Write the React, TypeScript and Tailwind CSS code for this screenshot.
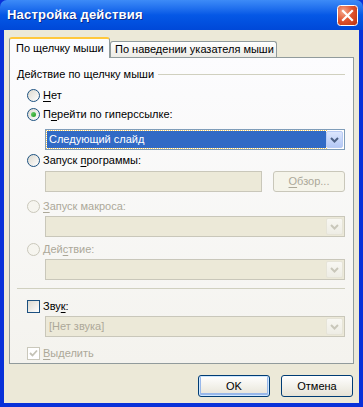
import React from 'react'

const font = { fontFamily: '"Liberation Sans", Arial, sans-serif' }

function Radio({ checked, disabled }: { checked?: boolean; disabled?: boolean }) {
  return (
    <span
      className={`relative flex h-[13px] w-[13px] shrink-0 items-center justify-center rounded-full border ${
        disabled
          ? 'border-[#CAC8BB] bg-[#F6F5EF]'
          : 'border-[#1C5180] bg-gradient-to-br from-[#DCD9CF] to-white'
      }`}
    >
      {checked && <span className="h-[5px] w-[5px] rounded-full bg-gradient-to-br from-[#6BD26B] to-[#1C9A1C]" />}
    </span>
  )
}

function Check({ checked, disabled }: { checked?: boolean; disabled?: boolean }) {
  return (
    <span
      className={`flex h-[13px] w-[13px] shrink-0 items-center justify-center border ${
        disabled ? 'border-[#CAC8BB] bg-white' : 'border-[#1C5180] bg-gradient-to-br from-[#DCD9CF] to-white'
      }`}
    >
      {checked && (
        <svg width="9" height="9" viewBox="0 0 9 9">
          <path d="M1 4 L3.5 6.5 L8 1.5" fill="none" stroke={disabled ? '#C4C2B6' : '#21A121'} strokeWidth="1.8" />
        </svg>
      )}
    </span>
  )
}

function Arrow({ disabled }: { disabled?: boolean }) {
  return (
    <span
      className={`flex h-full w-[17px] items-center justify-center rounded-[2px] border ${
        disabled
          ? 'border-[#E6E4D8] bg-gradient-to-b from-[#F8F7F2] to-[#EEEDE5]'
          : 'border-[#B9CBF3] bg-gradient-to-b from-[#DCE6FD] to-[#B4C8F5]'
      }`}
    >
      <svg width="9" height="6" viewBox="0 0 9 6">
        <path d="M1 1 L4.5 4.5 L8 1" fill="none" stroke={disabled ? '#C9C7BA' : '#4D6185'} strokeWidth="2" />
      </svg>
    </span>
  )
}

function Select({ value, selected, disabled }: { value?: string; selected?: boolean; disabled?: boolean }) {
  return (
    <div
      className={`flex h-[21px] items-stretch border p-[1px] ${
        disabled ? 'border-[#C9C7BA] bg-[#ECE9D8]' : 'border-[#7F9DB9] bg-white'
      }`}
    >
      <div
        className={`flex flex-1 items-center px-[2px] ${
          selected ? 'bg-[#316AC5] text-white outline-1 outline-dotted outline-[#F2C85B]' : ''
        } ${disabled ? 'text-[#ACA899]' : ''}`}
      >
        {value}
      </div>
      <Arrow disabled={disabled} />
    </div>
  )
}

function Option({
  label,
  ul,
  checked,
  disabled,
  box,
}: {
  label: string
  ul: number
  checked?: boolean
  disabled?: boolean
  box?: boolean
}) {
  return (
    <div className={`flex h-[13px] items-center gap-[3px] ${disabled ? 'text-[#ACA899]' : 'text-black'}`}>
      {box ? <Check checked={checked} disabled={disabled} /> : <Radio checked={checked} disabled={disabled} />}
      <span className="leading-[13px]">
        {label.slice(0, ul)}
        <span className="underline underline-offset-[2px]">{label[ul]}</span>
        {label.slice(ul + 1)}
      </span>
    </div>
  )
}

function CloseIcon() {
  return (
    <svg width="21" height="21" viewBox="0 0 21 21">
      <defs>
        <radialGradient id="cls" cx="0.3" cy="0.3" r="0.9">
          <stop offset="0" stopColor="#F6A88C" />
          <stop offset="0.5" stopColor="#E0542F" />
          <stop offset="1" stopColor="#C1360F" />
        </radialGradient>
      </defs>
      <rect x="0.5" y="0.5" width="20" height="20" rx="3" fill="url(#cls)" stroke="#FFFFFF" />
      <path d="M6 6 L15 15 M15 6 L6 15" stroke="#FFFFFF" strokeWidth="2.2" strokeLinecap="square" />
    </svg>
  )
}

export default function App() {
  return (
    <div className="flex h-[407px] w-[363px] flex-col overflow-hidden bg-[#0831D9] text-[11px]" style={font}>
      {/* title bar */}
      <div className="flex h-[30px] shrink-0 items-center justify-between rounded-t-[7px] bg-gradient-to-b from-[#3D8BF7] via-[#0558E6] to-[#0048D8] pl-[7px] pr-[5px]">
        <span className="text-[13px] font-bold tracking-[0.2px] text-white [text-shadow:1px_1px_0_#0A2A8A]">
          Настройка действия
        </span>
        <CloseIcon />
      </div>

      {/* body */}
      <div className="mx-[4px] mb-[4px] flex flex-1 flex-col bg-[#ECE9D8] px-[5px] pt-[6px]">
        {/* tabs */}
        <div className="relative z-10 flex h-[21px] items-end">
          <div className="-mb-[1px] flex h-[21px] w-[101px] items-center rounded-t-[3px] border-x border-t-2 border-x-[#919B9C] border-t-[#FFC83C] bg-[#FCFCFE] pl-[6px] pb-[1px]">
            По щелчку мыши
          </div>
          <div className="flex h-[16px] w-[167px] items-center rounded-t-[3px] border-x border-t border-[#919B9C] bg-gradient-to-b from-white to-[#ECEBE6] pl-[4px]">
            По наведении указателя мыши
          </div>
        </div>

        {/* panel */}
        <div className="flex h-[307px] flex-col border border-[#919B9C] bg-gradient-to-b from-[#FCFCFE] to-[#F4F3EE] pl-[7px] pr-[8px] pt-[10px]">
          <div className="flex h-[13px] items-center gap-[4px]">
            <span>Действие по щелчку мыши</span>
            <span className="h-px flex-1 bg-[#D0D0BF]" />
          </div>

          <div className="flex flex-col pl-[10px]">
            <div className="mt-[8px]">
              <Option label="Нет" ul={0} />
            </div>
            <div className="mt-[6px]">
              <Option label="Перейти по гиперссылке:" ul={1} checked />
            </div>
            <div className="mt-[8px] pl-[18px]">
              <Select value="Следующий слайд" selected />
            </div>
            <div className="mt-[4px]">
              <Option label="Запуск программы:" ul={7} />
            </div>
            <div className="mt-[4px] flex gap-[11px] pl-[18px]">
              <div className="h-[21px] flex-1 border border-[#C9C7BA] bg-[#ECE9D8]" />
              <div className="flex h-[21px] w-[72px] items-center justify-center rounded-[3px] border border-[#C9C7BA] bg-[#F5F4EA] text-[#ACA899]">
                <span className="underline underline-offset-[2px]">О</span>бзор...
              </div>
            </div>
            <div className="mt-[8px]">
              <Option label="Запуск макроса:" ul={0} disabled />
            </div>
            <div className="mt-[3px] pl-[18px]">
              <Select disabled />
            </div>
            <div className="mt-[6px]">
              <Option label="Действие:" ul={3} disabled />
            </div>
            <div className="mt-[3px] pl-[18px]">
              <Select disabled />
            </div>
          </div>

          <div className="mt-[8px] h-px bg-[#D0D0BF]" />

          <div className="flex flex-col pl-[10px]">
            <div className="mt-[11px]">
              <Option label="Звук:" ul={3} box />
            </div>
            <div className="mt-[3px] pl-[18px]">
              <Select value="[Нет звука]" disabled />
            </div>
            <div className="mt-[10px]">
              <Option label="Выделить" ul={0} box checked disabled />
            </div>
          </div>
        </div>

        {/* buttons */}
        <div className="mt-[11px] flex justify-end gap-[11px] pr-[1px]">
          <button className="flex h-[22px] w-[72px] items-center justify-center rounded-[3px] border border-[#003C74] bg-gradient-to-b from-white to-[#E6E3D6] shadow-[inset_0_0_0_1px_#CEE7FF,inset_0_-1px_0_2px_#98B8EA]">
            OK
          </button>
          <button className="flex h-[22px] w-[72px] items-center justify-center rounded-[3px] border border-[#003C74] bg-gradient-to-b from-white to-[#E6E3D6]">
            Отмена
          </button>
        </div>
      </div>
    </div>
  )
}
